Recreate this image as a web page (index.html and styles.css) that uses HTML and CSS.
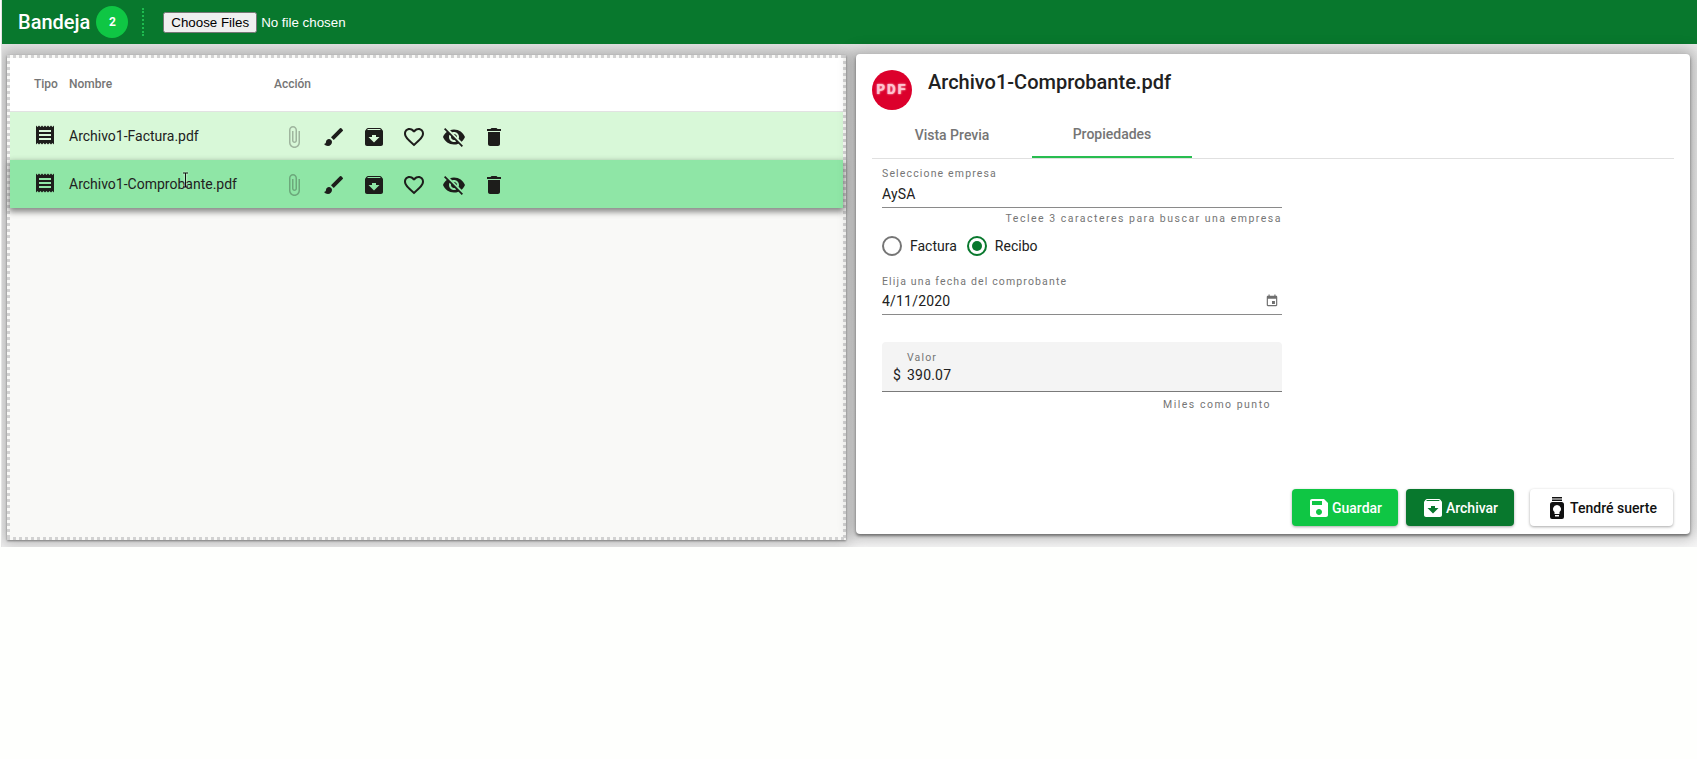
FILE: index.html
```html
<!DOCTYPE html>
<html lang="es">
<head>
    <meta charset="UTF-8">
    <meta name="viewport" content="width=device-width, initial-scale=1.0">
    <title>Bandeja</title>
    <link rel="stylesheet" href="styles.css">
</head>
<body>
    <svg class="sprite" aria-hidden="true">
        <symbol id="i-receipt" viewBox="0 0 24 24"><path d="M21 2.500l-1.500 1.500L18 2.500 16.500 4 15 2.500 13.500 4 12 2.500 10.500 4 9 2.500 7.500 4 6 2.500 4.500 4 3 2.500v19L4.500 20 6 21.500 7.500 20 9 21.500l1.500-1.500 1.500 1.500 1.500-1.500 1.500 1.500 1.500-1.500 1.500 1.500 1.500-1.500 1.500 1.500v-19zM18 17H6v-2h12v2zm0-4H6v-2h12v2zm0-4H6V7h12v2z"/></symbol>
        <symbol id="i-clip" viewBox="0 0 24 24"><path d="M16.500 6v11.500c0 2.210-1.790 4-4 4s-4-1.790-4-4V5c0-1.380 1.120-2.500 2.500-2.500s2.500 1.120 2.500 2.500v10.500c0 .55-.45 1-1 1s-1-.45-1-1V6H10v9.500c0 1.380 1.120 2.500 2.500 2.500s2.500-1.120 2.500-2.500V5c0-2.210-1.790-4-4-4S7 2.790 7 5v12.500c0 3.040 2.460 5.500 5.500 5.500s5.500-2.460 5.500-5.500V6h-1.500z"/></symbol>
        <symbol id="i-brush" viewBox="0 0 24 24"><path d="M7 14c-1.660 0-3 1.340-3 3 0 1.310-1.160 2-2 2 .92 1.220 2.490 2 4 2 2.210 0 4-1.790 4-4 0-1.660-1.340-3-3-3zm13.710-9.370l-1.340-1.340a.996.996 0 0 0-1.410 0L9 12.250 11.750 15l8.960-8.960a.996.996 0 0 0 0-1.410z"/></symbol>
        <symbol id="i-archive" viewBox="0 0 24 24"><path d="M20.540 5.230l-1.390-1.680C18.880 3.210 18.470 3 18 3H6c-.47 0-.88.210-1.160.550L3.460 5.230C3.170 5.570 3 6.020 3 6.500V19c0 1.100.9 2 2 2h14c1.100 0 2-.9 2-2V6.500c0-.48-.17-.93-.46-1.270zM12 17.500L6.500 12H10v-2h4v2h3.500L12 17.500zM5.120 5l.81-1h12l.94 1H5.120z"/></symbol>
        <symbol id="i-heart" viewBox="0 0 24 24"><path d="M16.500 3c-1.740 0-3.410.81-4.500 2.090C10.910 3.810 9.240 3 7.500 3 4.420 3 2 5.420 2 8.500c0 3.780 3.400 6.860 8.550 11.540L12 21.350l1.450-1.320C18.600 15.360 22 12.280 22 8.500 22 5.420 19.580 3 16.500 3zm-4.400 15.550l-.1.100-.1-.1C7.140 14.240 4 11.390 4 8.500 4 6.500 5.500 5 7.500 5c1.540 0 3.040.99 3.570 2.360h1.870C13.460 5.990 14.960 5 16.500 5c2 0 3.500 1.500 3.500 3.500 0 2.890-3.140 5.740-7.900 10.050z"/></symbol>
        <symbol id="i-eye-off" viewBox="0 0 24 24"><path d="M12 7c2.760 0 5 2.240 5 5 0 .65-.13 1.260-.36 1.830l2.920 2.920c1.510-1.260 2.700-2.890 3.430-4.750-1.730-4.390-6-7.500-11-7.500-1.400 0-2.740.25-3.980.7l2.160 2.160C10.740 7.130 11.350 7 12 7zM2 4.270l2.280 2.280.46.46C3.080 8.300 1.780 10.020 1 12c1.730 4.390 6 7.500 11 7.500 1.550 0 3.030-.3 4.380-.84l.42.42L19.730 22 21 20.730 3.270 3 2 4.270zM7.530 9.800l1.550 1.550c-.05.21-.08.430-.08.650 0 1.660 1.340 3 3 3 .22 0 .44-.03.650-.08l1.550 1.550c-.67.330-1.410.530-2.200.530-2.760 0-5-2.240-5-5 0-.79.200-1.530.530-2.200zm4.310-.78l3.150 3.150.02-.16c0-1.660-1.340-3-3-3l-.17.010z"/></symbol>
        <symbol id="i-trash" viewBox="0 0 24 24"><path d="M6 19c0 1.100.9 2 2 2h8c1.100 0 2-.9 2-2V7H6v12zM19 4h-3.500l-1-1h-5l-1 1H5v2h14V4z"/></symbol>
    </svg>

    <div class="app">
        <header class="topbar">
            <span class="topbar-title">Bandeja</span>
            <span class="count-badge">2</span>
            <span class="topbar-sep"></span>
            <input class="file-input" type="file" multiple>
        </header>

        <main class="content">
            <section class="inbox">
                <div class="inbox-head">
                    <span class="col-type">Tipo</span>
                    <span class="col-name">Nombre</span>
                    <span class="col-action">Acción</span>
                </div>

                <div class="row row-light">
                    <span class="col-type"><svg class="icon"><use href="#i-receipt"/></svg></span>
                    <span class="col-name">Archivo1-Factura.pdf</span>
                    <div class="col-action row-actions">
                        <button class="icon-btn btn-clip"><svg class="icon"><use href="#i-clip"/></svg></button>
                        <button class="icon-btn"><svg class="icon"><use href="#i-brush"/></svg></button>
                        <button class="icon-btn"><svg class="icon"><use href="#i-archive"/></svg></button>
                        <button class="icon-btn"><svg class="icon"><use href="#i-heart"/></svg></button>
                        <button class="icon-btn"><svg class="icon"><use href="#i-eye-off"/></svg></button>
                        <button class="icon-btn"><svg class="icon"><use href="#i-trash"/></svg></button>
                    </div>
                </div>

                <div class="row row-active">
                    <span class="col-type"><svg class="icon"><use href="#i-receipt"/></svg></span>
                    <span class="col-name">Archivo1-Comprobante.pdf</span>
                    <div class="col-action row-actions">
                        <button class="icon-btn btn-clip"><svg class="icon"><use href="#i-clip"/></svg></button>
                        <button class="icon-btn"><svg class="icon"><use href="#i-brush"/></svg></button>
                        <button class="icon-btn"><svg class="icon"><use href="#i-archive"/></svg></button>
                        <button class="icon-btn"><svg class="icon"><use href="#i-heart"/></svg></button>
                        <button class="icon-btn"><svg class="icon"><use href="#i-eye-off"/></svg></button>
                        <button class="icon-btn"><svg class="icon"><use href="#i-trash"/></svg></button>
                    </div>
                    <!-- mouse pointer caught in the capture -->
                    <svg class="text-cursor" viewBox="0 0 7 16"><path d="M1 1h5M3.500 1v14M1 15h5"/></svg>
                </div>
            </section>

            <section class="detail">
                <div class="detail-head">
                    <span class="pdf-avatar">PDF</span>
                    <h2 class="detail-title">Archivo1-Comprobante.pdf</h2>
                </div>

                <nav class="tabs">
                    <span class="tab">Vista Previa</span>
                    <span class="tab tab-active">Propiedades</span>
                </nav>

                <form class="props">
                    <div class="field field-company">
                        <span class="field-label">Seleccione empresa</span>
                        <span class="field-value">AySA</span>
                    </div>
                    <p class="hint">Teclee 3 caracteres para buscar una empresa</p>

                    <div class="radios">
                        <span class="radio"></span>
                        <span class="radio-label">Factura</span>
                        <span class="radio radio-on"></span>
                        <span class="radio-label">Recibo</span>
                    </div>

                    <div class="field field-date">
                        <span class="field-label">Elija una fecha del comprobante</span>
                        <span class="field-value">4/11/2020</span>
                        <svg class="date-icon" viewBox="0 0 24 24"><path d="M17 12h-5v5h5v-5zM16 1v2H8V1H6v2H5c-1.110 0-1.990.9-1.990 2L3 19c0 1.100.89 2 2 2h14c1.100 0 2-.9 2-2V5c0-1.100-.9-2-2-2h-1V1h-2zm3 18H5V8h14v11z"/></svg>
                    </div>

                    <div class="field-fill">
                        <span class="fill-prefix">$</span>
                        <div class="fill-main">
                            <span class="field-label">Valor</span>
                            <span class="field-value">390.07</span>
                        </div>
                    </div>
                    <p class="hint hint-inset">Miles como punto</p>
                </form>

                <div class="detail-actions">
                    <button class="btn btn-save" type="button">
                        <svg class="btn-icon" viewBox="0 0 24 24"><path d="M17 3H5c-1.110 0-2 .9-2 2v14c0 1.100.89 2 2 2h14c1.100 0 2-.9 2-2V7l-4-4zm-5 16c-1.660 0-3-1.340-3-3s1.340-3 3-3 3 1.340 3 3-1.340 3-3 3zm3-10H5V5h10v4z"/></svg>
                        Guardar
                    </button>
                    <button class="btn btn-archive" type="button">
                        <svg class="btn-icon"><use href="#i-archive"/></svg>
                        Archivar
                    </button>
                    <button class="btn btn-luck" type="button">
                        <svg class="btn-icon" viewBox="0 0 24 24"><path d="M7 1h10v1.500H7zM7 3.500h10V5H7zM7.500 6h9A2.500 2.500 0 0 1 19 8.500V21a2 2 0 0 1-2 2H7a2 2 0 0 1-2-2V8.500A2.500 2.500 0 0 1 7.500 6zM12 9a4 4 0 0 0-2.500 7.100V18h5v-1.900A4 4 0 0 0 12 9zM10 19v1.500h4V19z" fill-rule="evenodd"/></svg>
                        Tendré suerte
                    </button>
                </div>
            </section>
        </main>
    </div>
</body>
</html>
```

FILE: styles.css
```css
* {
    box-sizing: border-box;
}
body {
    margin: 0;
    background-color: #fefffd;
    font-family: Roboto, "Liberation Sans", sans-serif;
    color: #212121;
}
.sprite {
    display: none;
}
.app {
    margin-left: 2px;
    height: 547px;
    overflow: hidden;
    background: linear-gradient(to bottom, #c4c4c4 0, #e8e8e8 40px, #f6f6f6 100%);
    box-shadow: -1px 0 0 #e4e4e4;
}

/* top bar */
.topbar {
    position: relative;
    display: flex;
    align-items: center;
    height: 44px;
    padding-left: 16px;
    background-color: #08782d;
    color: white;
}
.topbar-title {
    font-size: 20px;
    font-weight: 500;
}
.count-badge {
    display: flex;
    align-items: center;
    justify-content: center;
    width: 32px;
    height: 32px;
    margin-left: 6px;
    border-radius: 50%;
    background-color: #0fc644;
    font-size: 12px;
    font-weight: 700;
}
.topbar-sep {
    height: 28px;
    margin-left: 14px;
    margin-right: 19px;
    border-left: 2px dotted #1dbb4f;
}
.file-input {
    font-family: "Liberation Sans", Arial, sans-serif;
    font-size: 13.333px;
    color: white;
}

.content {
    display: flex;
    align-items: flex-start;
    gap: 10px;
    padding: 10px 6px 0 5px;
}

/* left list, the drop zone border is square dots */
.inbox {
    width: 839px;
    height: 485px;
    margin-top: 1px;
    padding: 3px;
    background:
        repeating-linear-gradient(to right, #d2d2d2 0 3px, transparent 3px 6px) top / 100% 3px no-repeat,
        repeating-linear-gradient(to right, #d2d2d2 0 3px, transparent 3px 6px) bottom / 100% 3px no-repeat,
        repeating-linear-gradient(to bottom, #d2d2d2 0 3px, transparent 3px 6px) left / 3px 100% no-repeat,
        repeating-linear-gradient(to bottom, #d2d2d2 0 3px, transparent 3px 6px) right / 3px 100% no-repeat,
        #f9f9f7;
    box-shadow: 0 1px 2px rgba(0, 0, 0, 0.4), 0 0 14px 5px rgba(0, 0, 0, 0.24);
}
.inbox-head {
    display: flex;
    align-items: center;
    height: 54px;
    padding-bottom: 1px;
    background: white;
    border-bottom: 1px solid #e2e2e2;
    font-size: 12px;
    font-weight: 500;
    color: #757575;
}
.row {
    position: relative;
    display: flex;
    align-items: center;
    height: 48px;
    font-size: 14px;
}
.row-light {
    background-color: #d8f8d8;
}
.row-active {
    background-color: #8fe6a6;
    box-shadow: 0 3px 6px 1px rgba(0, 0, 0, 0.45);
}
.col-type {
    display: flex;
    align-items: center;
    width: 59px;
    padding-left: 24px;
}
.row .col-type {
    padding-left: 23px;
    margin-top: -2px;
}
.col-name {
    width: 205px;
}
.row-actions {
    display: flex;
    margin-top: 2px;
}
.icon {
    display: block;
    width: 24px;
    height: 24px;
    fill: #1d1d1b;
}
.icon-btn {
    width: 40px;
    height: 40px;
    padding: 8px;
    border: none;
    background: none;
}
.btn-clip .icon {
    opacity: 0.3;
}
.text-cursor {
    position: absolute;
    left: 172px;
    top: 12px;
    width: 7px;
    height: 16px;
    fill: none;
    stroke: #111;
    stroke-width: 1;
    paint-order: stroke;
    filter: drop-shadow(0 0 1px white);
}

/* right card */
.detail {
    position: relative;
    width: 834px;
    height: 480px;
    padding: 16px 16px 0 16px;
    border-radius: 4px;
    background: white;
    box-shadow: 0 2px 3px rgba(0, 0, 0, 0.45), 0 0 14px 5px rgba(0, 0, 0, 0.24);
}
.detail-head {
    display: flex;
    align-items: flex-start;
}
.pdf-avatar {
    display: flex;
    align-items: center;
    justify-content: center;
    width: 40px;
    height: 40px;
    border-radius: 50%;
    background-color: #dc002c;
    color: #ffc4d0;
    font-family: "Liberation Mono", monospace;
    font-size: 15px;
    font-weight: 700;
    letter-spacing: 1.500px;
    text-shadow: 0 0 2px #ffe4ea;
}
.detail-title {
    margin: 0 0 0 16px;
    font-size: 20px;
    font-weight: 500;
    line-height: 24px;
}
.tabs {
    display: flex;
    height: 49px;
    border-bottom: 1px solid #e0e0e0;
}
.tab {
    display: flex;
    align-items: center;
    justify-content: center;
    width: 160px;
    padding-top: 2px;
    font-size: 14px;
    font-weight: 500;
    color: #757575;
}
.tab-active {
    border-bottom: 2px solid #28bd50;
}

/* form */
.props {
    width: 400px;
    margin-left: 10px;
    padding-top: 8px;
}
.field {
    position: relative;
    display: flex;
    flex-direction: column;
    height: 40px;
    border-bottom: 1px solid #8a8a8a;
}
.field-company {
    height: 41px;
}
.field-company .field-value {
    margin-top: 3px;
}
.field-label {
    font-size: 10.500px;
    line-height: 14px;
    letter-spacing: 1.150px;
    color: #757575;
}
.field-value {
    font-size: 14px;
    line-height: 20px;
    margin-top: 2px;
    letter-spacing: 0.2px;
}
.hint {
    margin: 4px 0 0;
    font-size: 10.500px;
    line-height: 13px;
    letter-spacing: 1.500px;
    color: #757575;
    text-align: right;
}
.radios {
    display: flex;
    align-items: center;
    height: 20px;
    margin-top: 11px;
    font-size: 14px;
}
.radio {
    position: relative;
    width: 20px;
    height: 20px;
    border: 2px solid #757575;
    border-radius: 50%;
}
.radio-on {
    border-color: #08782d;
}
.radio-on::after {
    content: "";
    position: absolute;
    top: 3px;
    left: 3px;
    width: 10px;
    height: 10px;
    border-radius: 50%;
    background-color: #08782d;
}
.radio-label {
    margin-left: 8px;
    margin-right: 10px;
}
.field-date {
    margin-top: 19px;
}
.date-icon {
    position: absolute;
    right: 3px;
    top: 19px;
    width: 14px;
    height: 14px;
    fill: #6f6f6f;
}
.field-fill {
    display: flex;
    align-items: flex-end;
    height: 50px;
    margin-top: 27px;
    padding: 0 0 6px 11px;
    border-radius: 4px 4px 0 0;
    border-bottom: 1px solid #7a7a7a;
    background-color: #f4f4f4;
    font-size: 14px;
}
.fill-prefix {
    width: 14px;
    line-height: 20px;
}
.fill-main {
    display: flex;
    flex-direction: column;
}
.fill-main .field-value {
    margin-top: 0;
}
.hint-inset {
    margin-top: 6px;
    padding-right: 11px;
}

/* buttons */
.detail-actions {
    position: absolute;
    right: 17px;
    bottom: 8px;
    display: flex;
}
.btn {
    display: flex;
    align-items: center;
    justify-content: center;
    height: 37px;
    border: none;
    border-radius: 4px;
    font-family: inherit;
    font-size: 14px;
    font-weight: 500;
    box-shadow: 0 1px 3px rgba(0, 0, 0, 0.35);
}
.btn-icon {
    width: 24px;
    height: 24px;
    margin-right: 1px;
    margin-left: -1px;
    fill: currentColor;
}
.btn-save {
    width: 106px;
    background-color: #0fc644;
    color: white;
}
.btn-archive {
    width: 108px;
    margin-left: 8px;
    background-color: #08782d;
    color: white;
}
.btn-luck {
    width: 143px;
    margin-left: 16px;
    background-color: white;
    color: #111;
}
```
